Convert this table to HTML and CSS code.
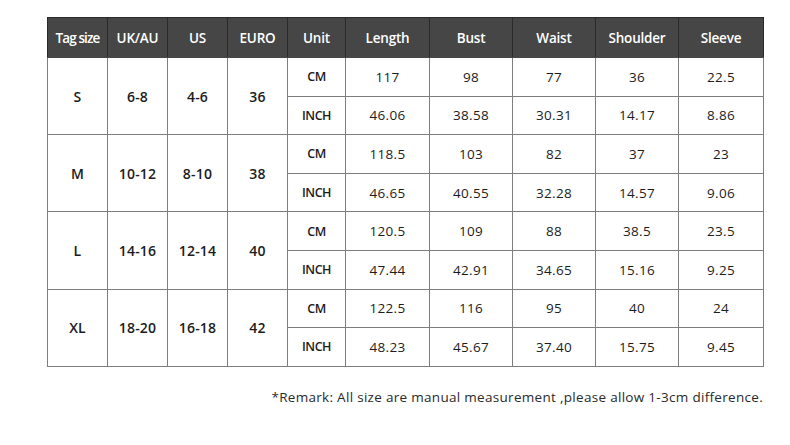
FILE: index.html
```html
<!DOCTYPE html>
<html>
<head>
<meta charset="utf-8">
<link rel="stylesheet" href="styles.css">
</head>
<body>
<div class="page">
  <table class="size-table">
    <colgroup>
      <col class="c-tag"><col class="c-uk"><col class="c-us"><col class="c-eu"><col class="c-unit">
      <col class="c-len"><col class="c-bust"><col class="c-waist"><col class="c-sh"><col class="c-sl">
    </colgroup>
    <thead>
      <tr>
        <th class="tight">Tag size</th><th>UK/AU</th><th>US</th><th>EURO</th><th>Unit</th>
        <th>Length</th><th>Bust</th><th>Waist</th><th>Shoulder</th><th>Sleeve</th>
      </tr>
    </thead>
    <tbody>
      <tr>
        <td rowspan="2" class="size">S</td><td rowspan="2" class="size">6-8</td><td rowspan="2" class="size">4-6</td><td rowspan="2" class="size">36</td>
        <td class="unit">CM</td><td>117</td><td>98</td><td>77</td><td>36</td><td>22.5</td>
      </tr>
      <tr>
        <td class="unit">INCH</td><td>46.06</td><td>38.58</td><td>30.31</td><td>14.17</td><td>8.86</td>
      </tr>
      <tr>
        <td rowspan="2" class="size">M</td><td rowspan="2" class="size">10-12</td><td rowspan="2" class="size">8-10</td><td rowspan="2" class="size">38</td>
        <td class="unit">CM</td><td>118.5</td><td>103</td><td>82</td><td>37</td><td>23</td>
      </tr>
      <tr>
        <td class="unit">INCH</td><td>46.65</td><td>40.55</td><td>32.28</td><td>14.57</td><td>9.06</td>
      </tr>
      <tr>
        <td rowspan="2" class="size">L</td><td rowspan="2" class="size">14-16</td><td rowspan="2" class="size">12-14</td><td rowspan="2" class="size">40</td>
        <td class="unit">CM</td><td>120.5</td><td>109</td><td>88</td><td>38.5</td><td>23.5</td>
      </tr>
      <tr>
        <td class="unit">INCH</td><td>47.44</td><td>42.91</td><td>34.65</td><td>15.16</td><td>9.25</td>
      </tr>
      <tr>
        <td rowspan="2" class="size">XL</td><td rowspan="2" class="size">18-20</td><td rowspan="2" class="size">16-18</td><td rowspan="2" class="size">42</td>
        <td class="unit">CM</td><td>122.5</td><td>116</td><td>95</td><td>40</td><td>24</td>
      </tr>
      <tr>
        <td class="unit">INCH</td><td>48.23</td><td>45.67</td><td>37.40</td><td>15.75</td><td>9.45</td>
      </tr>
    </tbody>
  </table>
  <p class="remark">*Remark: All size are manual measurement ,please allow 1-3cm difference.</p>
</div>
</body>
</html>
```

FILE: styles.css
```css
html, body {
  margin: 0;
  padding: 0;
  background: #ffffff;
}
.page {
  padding: 17px 0 0 47px;
  width: 716px;
  font-family: "Open Sans", "Lato", sans-serif;
  color: #1c1c1c;
}
.size-table {
  border-collapse: collapse;
  table-layout: fixed;
  width: 716px;
}
.c-tag { width: 60px; }
.c-uk { width: 60px; }
.c-us { width: 60px; }
.c-eu { width: 60px; }
.c-unit { width: 58px; }
.c-len { width: 84px; }
.c-bust { width: 83px; }
.c-waist { width: 83px; }
.c-sh { width: 83px; }
.c-sl { width: 85px; }
.size-table th {
  background: #464646;
  color: #ffffff;
  font-weight: 600;
  font-size: 13.5px;
  height: 38px;
  padding: 1px 0 0 0;
  border: 1px solid #2a2a2a;
  border-bottom-color: #464646;
  text-align: center;
  vertical-align: middle;
  letter-spacing: -0.2px;
}
.size-table th.tight {
  letter-spacing: -0.9px;
}
.size-table td {
  height: 37.6px;
  padding: 0;
  border: 1px solid #7d7d7d;
  text-align: center;
  vertical-align: middle;
  font-size: 13.5px;
  font-weight: 400;
  letter-spacing: 0.3px;
}
.size-table td.size {
  font-size: 14px;
  font-weight: 600;
  letter-spacing: 0.2px;
}
.size-table td.unit {
  font-size: 12.5px;
  font-weight: 600;
  letter-spacing: -0.5px;
}
.remark {
  margin: 21px 0 0 0;
  text-align: right;
  font-size: 13.5px;
  font-weight: 400;
  color: #2a2a2a;
  letter-spacing: 0.3px;
}
```
